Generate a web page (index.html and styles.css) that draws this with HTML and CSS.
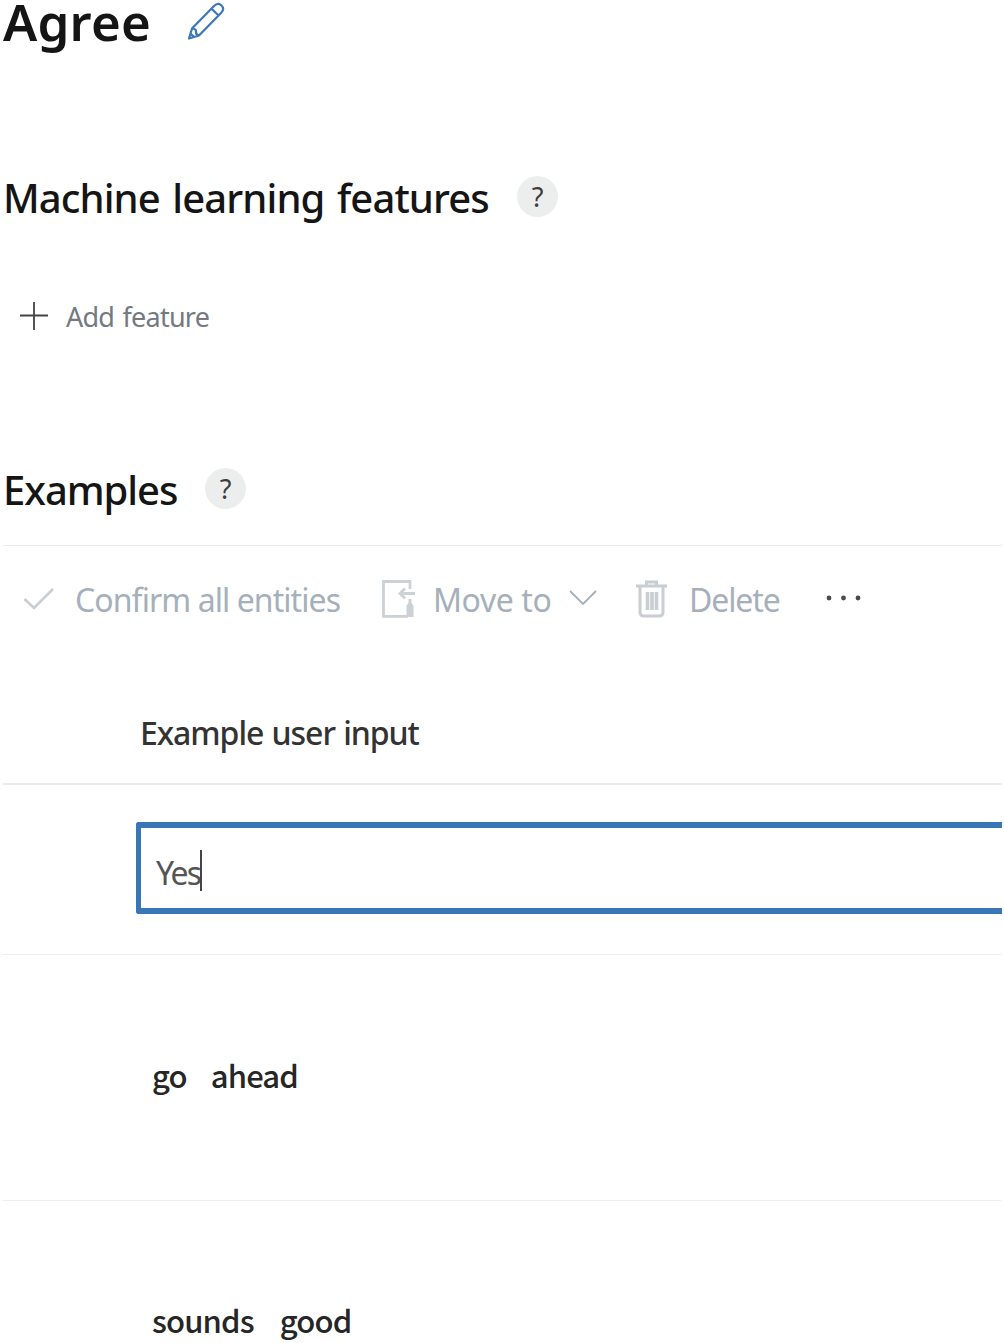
FILE: index.html
```
<!DOCTYPE html>
<html lang="en">
<head>
<meta charset="utf-8">
<title>Agree</title>
<link rel="stylesheet" href="styles.css">
</head>
<body>
<main class="page">
  <header class="title-row">
    <h1 class="title">Agree</h1>
    <svg class="pencil" width="40" height="40" viewBox="0 0 40 40" fill="none" stroke="#3a78ba" stroke-width="2.200" stroke-linejoin="round"><path d="M3 37.500 6 27.500 28 5q4-4 7.500-.5t-.5 7.500L13 34.500zM6 27.500q4.500.5 4 3.200t3 3.800M25.500 7.500l7 7M3 37.500l5-1.500-3.500-3.500z"/></svg>
  </header>
  <section class="section-head features">
    <h2 class="heading heading-ml">Machine learning features</h2>
    <span class="help">?</span>
  </section>
  <div class="add">
    <svg width="28" height="28" viewBox="0 0 28 28" stroke="#444" stroke-width="1.800"><path d="M0 13.500h28M14 0v28"/></svg>
    <span class="add-label">Add feature</span>
  </div>
  <section class="section-head examples">
    <h2 class="heading heading-ex">Examples</h2>
    <span class="help">?</span>
  </section>
  <nav class="toolbar">
    <svg class="check" width="32" height="24" viewBox="0 0 32 24" fill="none" stroke="#c8ced2" stroke-width="2.600"><path d="m1.500 12 9.500 9L30 2"/></svg>
    <span class="tool confirm">Confirm all entities</span>
    <svg class="move-icon" width="34" height="38" viewBox="0 0 34 38" fill="none" stroke="#cbd1d5" stroke-width="2.800"><path d="M28 9V1.500H1.500v34.800H26"/><path d="M33 13.500H18M23 8.500l-5 5 5 5"/><path d="M27.500 19v4l-2 3v10h5V26l-2-3v-4" fill="#cbd1d5" stroke-width="2"/></svg>
    <span class="tool move">Move to</span>
    <svg class="chevron" width="28" height="18" viewBox="0 0 28 18" fill="none" stroke="#a5b0ba" stroke-width="1.900"><path d="m1 2 13 13L27 2"/></svg>
    <svg class="trash" width="32" height="38" viewBox="0 0 32 38" fill="none" stroke="#c8ced2" stroke-width="3"><path d="M0 6h31M10.500 5V2h10v3M4 7v25q0 4 4 4h15q4 0 4-4V7"/><path d="M11.500 12v18M16 12v18M20.500 12v18" stroke-width="3.600"/></svg>
    <span class="tool delete">Delete</span>
    <svg class="dots" width="36" height="6" viewBox="0 0 36 6" fill="#454b50"><circle cx="3" cy="3" r="2.400"/><circle cx="17.500" cy="3" r="2.400"/><circle cx="32" cy="3" r="2.400"/></svg>
  </nav>
  <div class="table-head"><span class="col-label">Example user input</span></div>
  <div class="input-row">
    <div class="input"><span class="value">Yes</span><span class="caret"></span></div>
  </div>
  <div class="row"><span class="word">go</span><span class="word">ahead</span></div>
  <div class="row row-last"><span class="word">sounds</span><span class="word">good</span></div>
</main>
</body>
</html>
```
FILE: styles.css
```
* { box-sizing: border-box; }
body { margin: 0; background: #fff; font-family: "Noto Sans", sans-serif; color: #151515; }
.page { width: 1004px; height: 1343px; padding: 0 2px 0 3px; }
svg { display: block; flex: none; }
h1, h2 { margin: 0; }
span, h1, h2 { white-space: nowrap; flex: none; }
.title-row { height: 42px; display: flex; align-items: center; }
.title { width: 183px; font-size: 51px; line-height: 42px; font-weight: 600; letter-spacing: 0.200px; }
.section-head { height: 40px; display: flex; align-items: center; }
.features { margin-top: 135px; }
.heading { padding-top: 2px; font-size: 40px; line-height: 40px; font-weight: 500; letter-spacing: -0.900px; word-spacing: 3px; }
.heading-ml { width: 514px; }
.heading-ex { width: 202px; letter-spacing: -1.050px; }
.help { width: 41px; height: 41px; margin-bottom: 2px; border-radius: 50%; background: #eceeee; color: #3c3c3c; font-size: 27px; line-height: 41px; font-weight: 400; text-align: center; }
.add { height: 40px; margin-top: 79px; padding-left: 17px; display: flex; align-items: center; }
.add-label { margin-left: 18px; padding-top: 2px; font-size: 27px; line-height: 40px; letter-spacing: -0.750px; word-spacing: 2px; color: #747a80; }
.examples { margin-top: 133px; }
.toolbar { height: 107px; margin-top: 36px; border-top: 1px solid #e9ebeb; display: flex; align-items: center; }
.check { margin-left: 20px; }
.tool { padding-top: 1px; font-size: 32px; line-height: 40px; color: #a5b0ba; }
.confirm { width: 306px; margin-left: 20px; margin-right: 1px; letter-spacing: -0.930px; }
.move { width: 136px; margin-left: 17px; letter-spacing: -0.400px; }
.chevron { margin: 0 39px 3px 0; }
.delete { width: 137px; margin-left: 21px; letter-spacing: -1.100px; }
.dots { margin-bottom: 3px; }
.table-head { height: 133px; padding: 31px 0 0 137px; border-bottom: 2px solid #e9ebeb; }
.col-label { display: block; font-size: 32px; line-height: 100px; font-weight: 500; letter-spacing: -1.050px; word-spacing: 1px; color: #333; }
.input-row { height: 170px; padding: 37px 0 0 133px; border-bottom: 1px solid #eee; }
.input { height: 92px; border: solid #3a75b6; border-width: 6px 0 6px 5.500px; border-radius: 3px 0 0 3px; padding: 4px 0 0 15px; display: flex; align-items: center; }
.value { width: 44px; padding-top: 5px; font-size: 32px; line-height: 72px; letter-spacing: -1.900px; color: #555; }
.caret { width: 2px; height: 41px; background: #444; }
.row { height: 246px; padding: 0 0 6px 149px; border-bottom: 1px solid #eee; display: flex; align-items: center; gap: 24px; }
.row-last { height: 142px; padding: 99px 0 0 149px; align-items: flex-start; border: 0; gap: 26px; }
.word { font-family: "Noto Sans CJK SC", sans-serif; font-size: 31px; line-height: 40px; font-weight: 500; letter-spacing: -0.850px; color: #262626; }
```
